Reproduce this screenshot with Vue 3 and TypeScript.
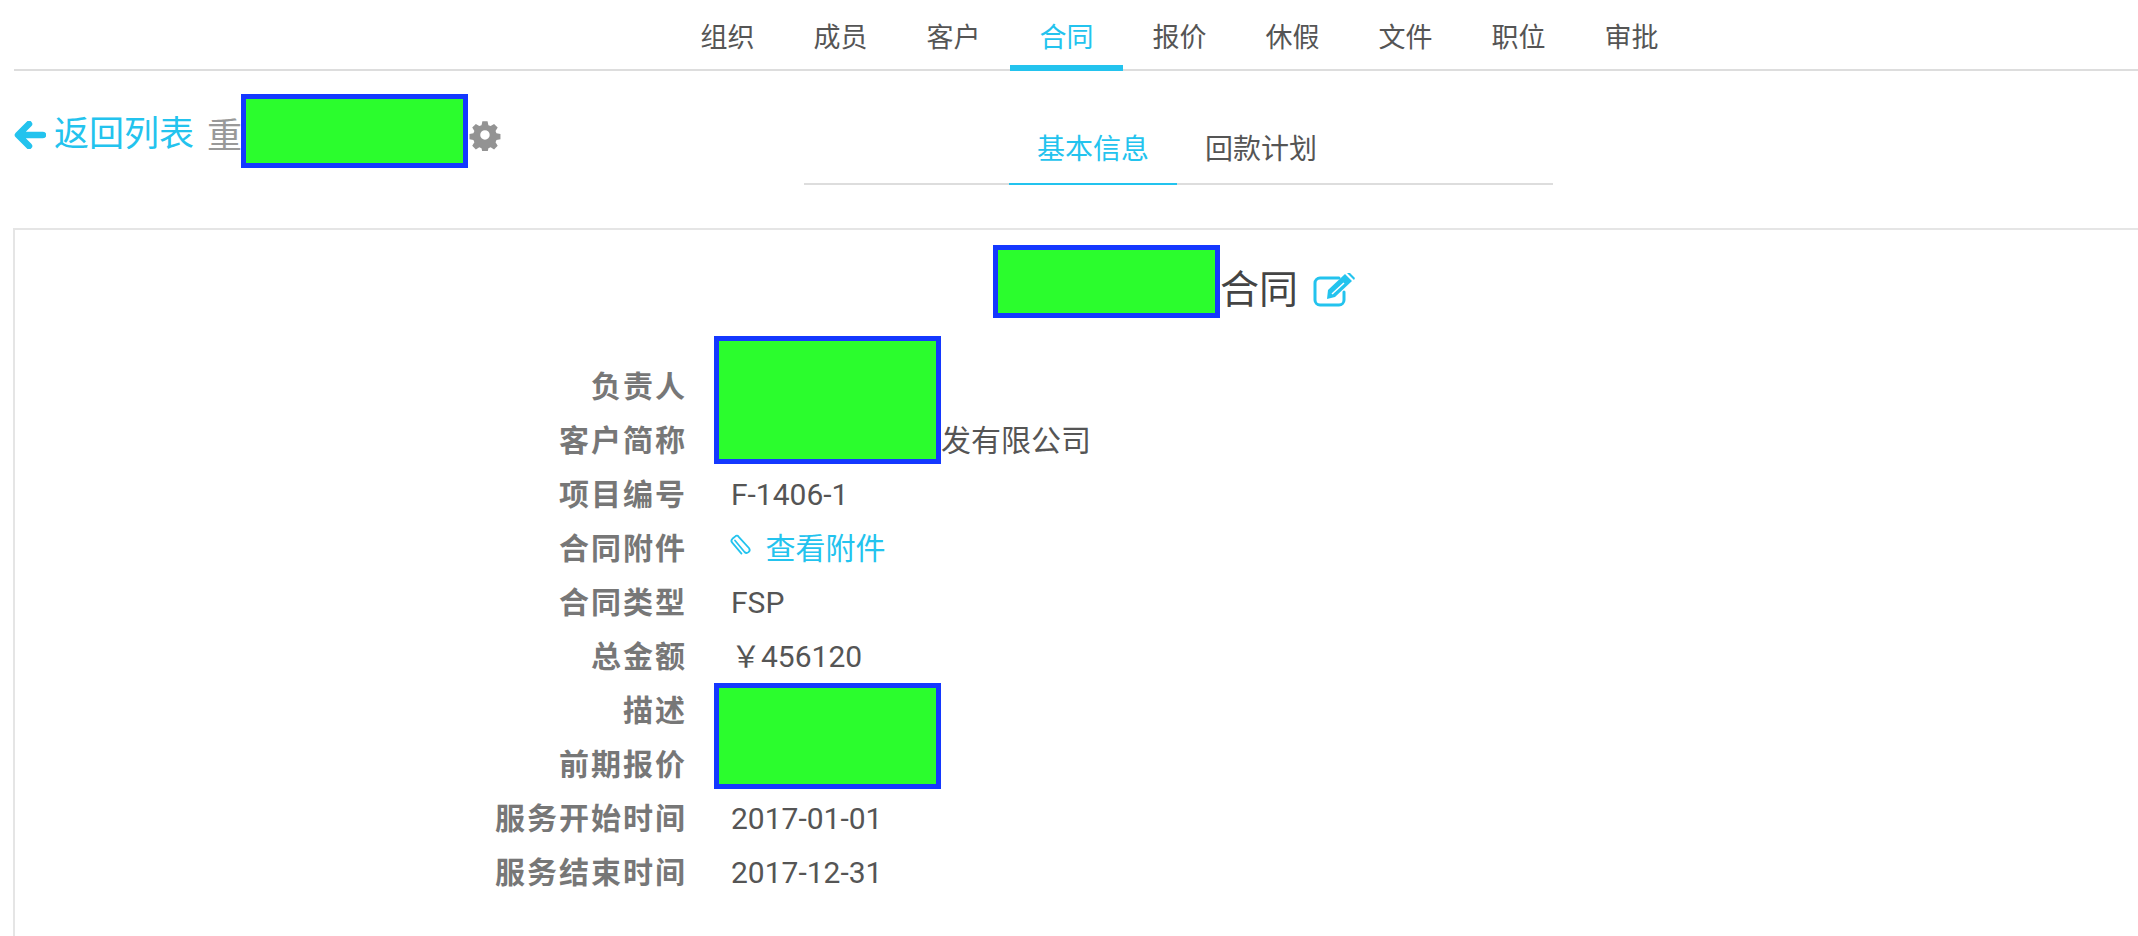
<script setup lang="ts">
const navItems = ['组织', '成员', '客户', '合同', '报价', '休假', '文件', '职位', '审批']
const subTabs = ['基本信息', '回款计划']
</script>

<template>
  <div class="page">
    <nav class="nav">
      <a v-for="n in navItems" :key="n" class="nav-item" :class="{ active: n === '合同' }">{{ n }}</a>
    </nav>

    <div class="head">
      <div class="crumb">
        <a class="back">
          <svg class="arrow" viewBox="0 0 32 28">
            <path d="M15 3 4 14l11 11M5 14h24" fill="none" stroke="currentColor" stroke-width="6.5" stroke-linecap="round" stroke-linejoin="round" />
          </svg>
          返回列表
        </a>
        <span class="crumb-title">重<span class="gap"><i class="mask"></i></span>同</span>
        <svg class="gear" viewBox="0 0 32 32">
          <path fill-rule="evenodd" d="M13 0h6l1 4.6 2.6 1.1 4-2.5 4.2 4.2-2.5 4 1.1 2.6 4.6 1v6l-4.6 1-1.1 2.6 2.5 4-4.2 4.2-4-2.5-2.6 1.1-1 4.6h-6l-1-4.6-2.6-1.1-4 2.5-4.2-4.2 2.5-4-1.1-2.6-4.6-1v-6l4.6-1 1.1-2.6-2.5-4 4.2-4.2 4 2.5L12 4.6zM16 10.500a5.500 5.500 0 1 0 0 11 5.500 5.500 0 0 0 0-11z" transform="translate(2.200 2.200) scale(.86)" />
        </svg>
      </div>
      <div class="sub-tabs">
        <a v-for="t in subTabs" :key="t" class="sub-tab" :class="{ active: t === '基本信息' }">{{ t }}</a>
      </div>
    </div>

    <section class="card">
      <h2 class="card-title">
        <span class="gap title-gap"><i class="mask"></i></span>合同
        <svg class="edit" viewBox="0 0 42 34">
          <path d="M26 5H7a5 5 0 0 0-5 5v17a5 5 0 0 0 5 5h19a5 5 0 0 0 5-5v-8" fill="none" stroke="currentColor" stroke-width="3" stroke-linecap="round" />
          <path d="M15 17 32 1l7 7-17 16-8 2zM34 0l7 7 1-2-5-5z" fill="currentColor" />
          <path d="M19 21l12-11" stroke="#fff" stroke-width="1.500" />
        </svg>
      </h2>

      <dl class="rows">
        <dt>负责人</dt>
        <dd></dd>
        <dt>客户简称</dt>
        <dd><span class="gap name-gap"><i class="mask tall"></i></span>开发有限公司</dd>
        <dt>项目编号</dt>
        <dd>F-1406-1</dd>
        <dt>合同附件</dt>
        <dd>
          <a class="attach">
            <svg class="clip" viewBox="0 0 24 24">
              <path d="M6 6.500 15.500 18a3 3 0 0 0 4.600-3.800L9.500 2.600a2 2 0 0 0-3.200-.2L3.400 4.800a2.700 2.700 0 0 0-.2 3.800l9.300 11" transform="translate(0 1)" fill="none" stroke="currentColor" stroke-width="1.800" stroke-linecap="round" />
            </svg>
            查看附件
          </a>
        </dd>
        <dt>合同类型</dt>
        <dd>FSP</dd>
        <dt>总金额</dt>
        <dd>￥456120</dd>
        <dt>描述</dt>
        <dd><i class="mask desc"></i></dd>
        <dt>前期报价</dt>
        <dd></dd>
        <dt>服务开始时间</dt>
        <dd>2017-01-01</dd>
        <dt>服务结束时间</dt>
        <dd>2017-12-31</dd>
      </dl>
    </section>
  </div>
</template>

<style scoped>
.page {
  height: 936px;
  display: flex;
  flex-direction: column;
  overflow: hidden;
  background: #fff;
  color: #555;
  font-family: Roboto, "Noto Sans CJK SC", sans-serif;
}
.nav {
  height: 71px;
  margin-left: 14px;
  padding-left: 657px;
  display: flex;
  box-sizing: border-box;
  border-bottom: 2px solid #ddd;
}
.nav-item {
  width: 113px;
  height: 71px;
  box-sizing: border-box;
  text-align: center;
  font-size: 27px;
  line-height: 76px;
}
.nav-item.active {
  color: #23c3ee;
  border-bottom: 6px solid #23c3ee;
}
.head {
  height: 157px;
  display: flex;
  align-items: flex-start;
}
.crumb {
  width: 790px;
  margin-left: 14px;
  padding-top: 42px;
  display: flex;
  align-items: center;
  font-size: 35px;
  line-height: 40px;
}
.back {
  display: flex;
  align-items: center;
  color: #23c3ee;
}
.arrow {
  width: 32px;
  height: 28px;
  margin-right: 8px;
}
.crumb-title {
  margin-left: 13px;
  color: #999;
}
.gap {
  display: inline-block;
  position: relative;
  width: 180px;
  height: 1em;
}
.mask {
  position: absolute;
  left: -1px;
  top: -19px;
  width: 227px;
  height: 74px;
  box-sizing: border-box;
  border: 5px solid #1438ff;
  background: #2bfd2d;
}
.gear {
  width: 32px;
  height: 32px;
  margin-left: 12px;
  fill: #939393;
}
.sub-tabs {
  width: 749px;
  height: 114px;
  box-sizing: border-box;
  display: flex;
  border-bottom: 2px solid #ddd;
}
.sub-tab {
  height: 114px;
  padding: 0 28px;
  box-sizing: border-box;
  font-size: 28px;
  line-height: 158px;
}
.sub-tab:first-child {
  margin-left: 205px;
}
.sub-tab.active {
  color: #23c3ee;
  border-bottom: 2px solid #23c3ee;
}
.card {
  flex: 1;
  margin-left: 13px;
  border: solid #e5e5e5;
  border-width: 2px 0 0 2px;
}
.card-title {
  margin: 0;
  padding: 15px 0 0 978px;
  display: flex;
  align-items: flex-end;
  height: 84px;
  box-sizing: border-box;
  font-size: 39px;
  font-weight: 400;
  line-height: 48px;
  color: #444;
}
.title-gap {
  width: 227px;
}
.title-gap .mask {
  left: 0;
  top: -30px;
  height: 73px;
}
.edit {
  width: 42px;
  height: 34px;
  margin: 0 0 7px 15px;
  color: #23c3ee;
}
.rows {
  margin: 46px 0 0;
  display: grid;
  grid-template-columns: 672px 1fr;
  grid-auto-rows: 54px;
  column-gap: 44px;
  font-size: 30px;
  line-height: 54px;
}
dt {
  text-align: right;
  font-weight: 700;
  color: #777;
  letter-spacing: 2px;
}
dd {
  margin: 0;
  position: relative;
  white-space: nowrap;
}
.name-gap {
  width: 180px;
}
.name-gap .tall {
  left: -17px;
  top: -85px;
  height: 128px;
}
.desc {
  left: -17px;
  top: -1px;
  height: 106px;
}
.attach {
  color: #23c3ee;
}
.clip {
  width: 24px;
  height: 24px;
  margin: 0 5px 0 -2px;
  vertical-align: 2px;
}
</style>

<style>
html,
body {
  margin: 0;
  background: #fff;
}
</style>
